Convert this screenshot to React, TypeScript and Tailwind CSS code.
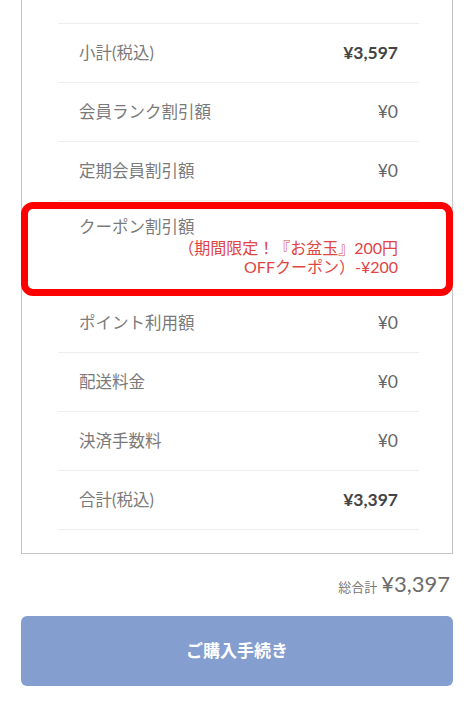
const rows: { label: string; value: string; strong?: boolean }[] = [
  { label: "小計(税込)", value: "¥3,597", strong: true },
  { label: "会員ランク割引額", value: "¥0" },
  { label: "定期会員割引額", value: "¥0" },
];

const rows2: { label: string; value: string; strong?: boolean }[] = [
  { label: "ポイント利用額", value: "¥0" },
  { label: "配送料金", value: "¥0" },
  { label: "決済手数料", value: "¥0" },
  { label: "合計(税込)", value: "¥3,397", strong: true },
];

const font = { fontFamily: '"Lato", "Noto Sans CJK JP", sans-serif' };

const Row = ({ label, value, strong }: { label: string; value: string; strong?: boolean }) => (
  <div className="flex h-[59px] items-center justify-between border-b border-[#eeeeee] px-[21px]">
    <span className="text-[16.5px] text-[#7a7a7a]">{label}</span>
    <span className={strong ? "text-[17.5px] font-bold text-[#444]" : "text-[17.5px] text-[#666]"}>{value}</span>
  </div>
);

export default function App() {
  return (
    <div className="min-h-[704px] bg-white" style={font}>
      <div className="mx-[21px] border-x border-b border-[#c4c4c4] pl-[36px] pr-[33px] pb-[23px] pt-[23px]">
        <div className="border-t border-[#eeeeee]">
          {rows.map((r) => (
            <Row key={r.label} {...r} />
          ))}
          <div className="relative h-[93px] border-b border-[#eeeeee] px-[21px] pt-[15px]">
            <div className="text-[16.5px] leading-[22px] text-[#7a7a7a]">クーポン割引額</div>
            <div className="text-right text-[16px] leading-[19px] text-[#e04444]">
              <div>（期間限定！『お盆玉』200円</div>
              <div>OFFクーポン）-¥200</div>
            </div>
            <div className="absolute -left-[37px] -right-[34px] top-[1px] -bottom-[3px] rounded-[12px] border-[7px] border-[#ff0000]" />
          </div>
          {rows2.map((r) => (
            <Row key={r.label} {...r} />
          ))}
        </div>
      </div>
      <div className="mr-[24px] mt-[13px] flex items-baseline justify-end gap-1 text-[#777]">
        <span className="text-[13px]">総合計</span>
        <span className="text-[22px] text-[#6b6b6b]">¥3,397</span>
      </div>
      <button className="mx-[21px] mt-[16px] flex h-[70px] w-[432px] items-center justify-center rounded-[6px] bg-[#849ed0] text-[17px] font-bold text-white">
        ご購入手続き
      </button>
    </div>
  );
}
